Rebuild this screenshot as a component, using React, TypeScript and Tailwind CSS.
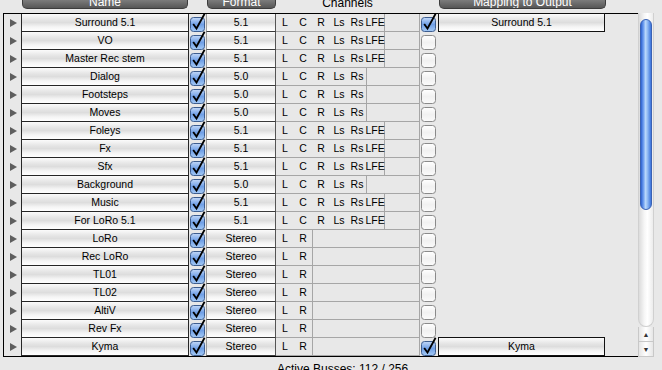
import React from 'react';

type Bus = { name: string; fmt: '5.1' | '5.0' | 'Stereo'; map?: string };

const busses: Bus[] = [
  { name: 'Surround 5.1', fmt: '5.1', map: 'Surround 5.1' },
  { name: 'VO', fmt: '5.1' },
  { name: 'Master Rec stem', fmt: '5.1' },
  { name: 'Dialog', fmt: '5.0' },
  { name: 'Footsteps', fmt: '5.0' },
  { name: 'Moves', fmt: '5.0' },
  { name: 'Foleys', fmt: '5.1' },
  { name: 'Fx', fmt: '5.1' },
  { name: 'Sfx', fmt: '5.1' },
  { name: 'Background', fmt: '5.0' },
  { name: 'Music', fmt: '5.1' },
  { name: 'For LoRo 5.1', fmt: '5.1' },
  { name: 'LoRo', fmt: 'Stereo' },
  { name: 'Rec LoRo', fmt: 'Stereo' },
  { name: 'TL01', fmt: 'Stereo' },
  { name: 'TL02', fmt: 'Stereo' },
  { name: 'AltiV', fmt: 'Stereo' },
  { name: 'Rev Fx', fmt: 'Stereo' },
  { name: 'Kyma', fmt: 'Stereo', map: 'Kyma' },
];

const channelMap: Record<Bus['fmt'], string[]> = {
  '5.1': ['L', 'C', 'R', 'Ls', 'Rs', 'LFE'],
  '5.0': ['L', 'C', 'R', 'Ls', 'Rs'],
  Stereo: ['L', 'R'],
};

const cellBg =
  'bg-[linear-gradient(to_bottom,#fbfbfb_0%,#e4e4e4_35%,#dddddd_50%,#f4f4f4_75%,#ffffff_100%)]';

function Checkbox({ checked }: { checked: boolean }) {
  return (
    <svg width="16" height="18" viewBox="0 0 16 18" overflow="visible" className="shrink-0">
      <defs>
        <linearGradient id="cbOn" x1="0" y1="0" x2="0" y2="1">
          <stop offset="0" stopColor="#c3d9f8" />
          <stop offset="0.5" stopColor="#6f9fe6" />
          <stop offset="1" stopColor="#a4caf6" />
        </linearGradient>
        <linearGradient id="cbOff" x1="0" y1="0" x2="0" y2="1">
          <stop offset="0" stopColor="#ffffff" />
          <stop offset="0.5" stopColor="#f1f1f1" />
          <stop offset="1" stopColor="#fbfbfb" />
        </linearGradient>
      </defs>
      <rect
        x="0.5"
        y="3.5"
        width="14"
        height="14"
        rx="3"
        fill={checked ? 'url(#cbOn)' : 'url(#cbOff)'}
        stroke={checked ? '#3d5d8f' : '#8a8a8a'}
      />
      {checked && (
        <polyline
          points="3.2,10 6.5,14.5 14.6,-0.3"
          fill="none"
          stroke="#000"
          strokeWidth="1.8"
          strokeLinejoin="miter"
        />
      )}
    </svg>
  );
}

function HeaderButton({ label, width }: { label: string; width: string }) {
  return (
    <div
      className={`${width} h-[9px] flex items-end justify-center overflow-hidden rounded-b-[5px] border border-t-0 border-[#3c3c3c] bg-[linear-gradient(to_bottom,#7c7c7c,#565656)] text-white text-[12px] leading-[12px]`}
    >
      {label}
    </div>
  );
}

function Row({ bus }: { bus: Bus }) {
  const chans = channelMap[bus.fmt];
  return (
    <div className="flex h-[18px] text-[10.5px] text-black">
      {/* disclosure */}
      <div className="w-[17px] flex items-center justify-center pl-[1px]">
        <div className="w-0 h-0 border-y-[4px] border-y-transparent border-l-[7px] border-l-[#5e5e5e]" />
      </div>
      {/* name */}
      <div
        className={`w-[168px] h-[18px] flex items-center justify-center border-x border-b border-[#262626] ${cellBg}`}
      >
        {bus.name}
      </div>
      <div className="w-[17px] pl-[1px]">
        <Checkbox checked />
      </div>
      {/* format */}
      <div
        className={`w-[70px] h-[18px] flex items-center justify-center border-l border-l-[#9c9c9c] border-r border-r-[#555] border-b border-b-[#3a3a3a] ${cellBg}`}
      >
        {bus.fmt}
      </div>
      {/* channels */}
      <div className="w-[144px] h-[18px] flex border-r border-b border-[#a6a6a6]">
        <div className="flex border-r border-[#a6a6a6]">
          {chans.map((c) => (
            <span key={c} className="w-[18px] flex items-center justify-center">
              {c}
            </span>
          ))}
        </div>
      </div>
      <div className="w-[18px] pl-[1px]">
        <Checkbox checked={!!bus.map} />
      </div>
      {bus.map && (
        <div
          className={`w-[167px] h-[19px] -mt-[1px] flex items-center justify-center border border-[#111] ${cellBg}`}
        >
          {bus.map}
        </div>
      )}
    </div>
  );
}

function Scrollbar() {
  return (
    <div className="w-[16px] h-[344px] flex flex-col bg-[#e8e8e8]">
      <div className="flex-1 rounded-b-[8px] border-x border-b border-[#d0d0d0] bg-[linear-gradient(to_right,#dcdcdc,#f7f7f7_40%,#ffffff_60%,#ececec)] px-[1px]">
        <div className="mt-[6px] h-[191px] rounded-full border border-[#3a62b4] bg-[linear-gradient(to_right,#2e63d1_0%,#6f9ff0_25%,#b7d6fb_45%,#9cc3f6_60%,#3b74dc_100%)]" />
      </div>
      <div className="h-[15px] flex items-center justify-center border-x border-b border-[#c8c8c8] bg-[linear-gradient(to_right,#e6e6e6,#ffffff,#e6e6e6)] text-[#333] text-[7px] leading-none">
        ▲
      </div>
      <div className="h-[15px] flex items-center justify-center border-x border-b border-[#c8c8c8] bg-[linear-gradient(to_right,#e6e6e6,#ffffff,#e6e6e6)] text-[#333] text-[7px] leading-none">
        ▼
      </div>
    </div>
  );
}

export default function App() {
  return (
    <div className="w-[662px] h-[370px] overflow-hidden bg-[#e8e8e8] font-['Liberation_Sans',Arial,sans-serif]">
      {/* column headers */}
      <div className="flex h-[13px]">
        <div className="w-[22px]" />
        <HeaderButton label="Name" width="w-[166px]" />
        <div className="w-[19px]" />
        <HeaderButton label="Format" width="w-[69px]" />
        <div className="w-[143px] h-[9px] flex items-end justify-center text-[12px] leading-[12px] text-black overflow-hidden">
          Channels
        </div>
        <div className="w-[20px]" />
        <HeaderButton label="Mapping to Output" width="w-[167px]" />
      </div>

      <div className="flex">
        <div className="w-[635px] ml-[3px] border-l border-y border-black">
          {busses.map((b) => (
            <Row key={b.name} bus={b} />
          ))}
        </div>
        <Scrollbar />
      </div>

      <div className="pl-[277px] pt-[5px] text-[12px] leading-[14px] text-black">
        Active Busses: 112 / 256
      </div>
    </div>
  );
}
